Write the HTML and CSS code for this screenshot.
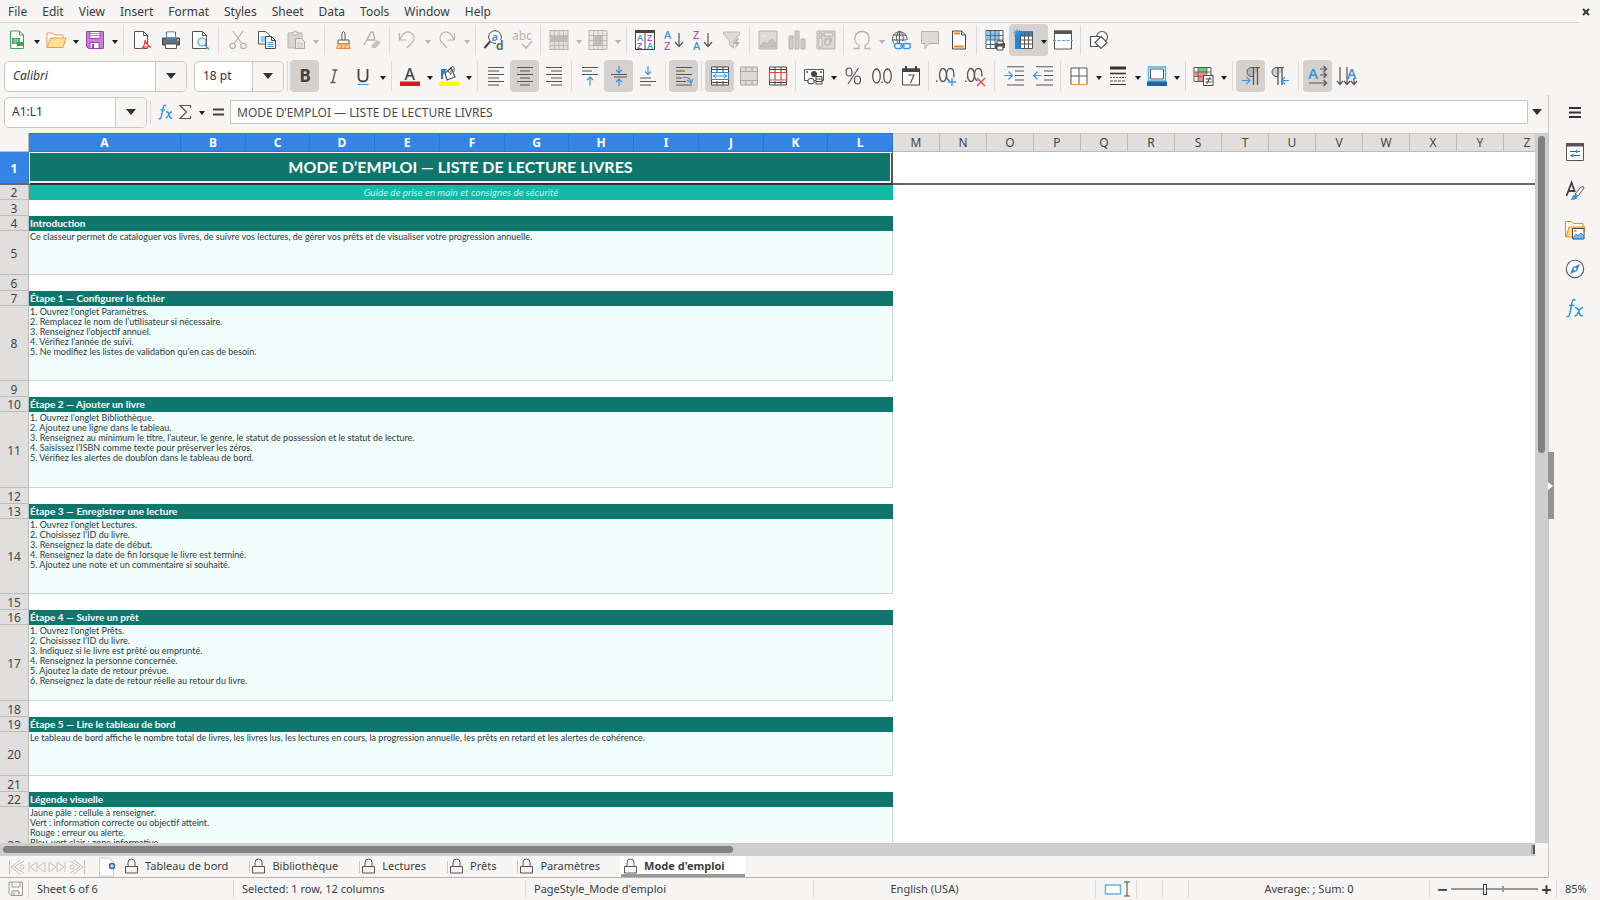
FILE: index.html
```
<!DOCTYPE html>
<html lang="en">
<head>
<meta charset="utf-8">
<title>Mode d'emploi</title>
<link rel="stylesheet" href="styles.css">
</head>
<body>
<div class="app">
<nav class="menubar">
<button>File</button><button>Edit</button><button>View</button><button>Insert</button><button>Format</button><button>Styles</button><button>Sheet</button><button>Data</button><button>Tools</button><button>Window</button><button>Help</button>
<button class="close" aria-label="Close"><svg viewBox="0 0 8 8" width="8" height="8"><path d="M1 1l6 6M7 1l-6 6" stroke="#2e3436" stroke-width="2"/></svg></button>
</nav>

<div class="toolbar">
<button class="tb drop" aria-label="New"><svg viewBox="0 0 20 20"><path d="M3.500 1h9l4 4v13.500h-13z" fill="#fff" stroke="#3fa45b"/><path d="M12.500 1v4h4" fill="none" stroke="#3fa45b"/><path d="M5 8h8v6H5z" fill="#3a9a55"/><path d="M5.500 10h7M5.500 12h7M8 8v6M10.500 8v6" stroke="#d9f0df" stroke-width=".6"/><path d="M10 12h6v4h-6z" fill="#3fa45b"/></svg></button>
<button class="tb drop" aria-label="Open"><svg viewBox="0 0 20 20"><path d="M1 17.500V3h6l2 2h8v3" fill="#fff" stroke="#ed9a4e"/><path d="M1 17.500L4.500 8H20l-3 9.500z" fill="#fbdf93" stroke="#ed9a4e"/></svg></button>
<button class="tb drop" aria-label="Save"><svg viewBox="0 0 20 20"><path d="M1.500 1.500h17v17h-15l-2-2z" fill="#c97fd6" stroke="#9c3fae"/><path d="M5 1.500h10v7H5z" fill="#fff" stroke="#9c3fae"/><path d="M6 3.500h8M6 5.500h8" stroke="#c97fd6"/><path d="M5 12.500h9v6H5z" fill="#fff" stroke="#9c3fae"/><path d="M7 14h2v4H7z" fill="#9c3fae"/></svg></button>
<i class="sep"></i>
<button class="tb" aria-label="Export PDF"><svg viewBox="0 0 20 20"><path d="M2.500 1.500h9l4 4v13h-13z" fill="#fff" stroke="#555"/><path d="M11.500 1.500v4h4" fill="none" stroke="#555"/><path d="M9 19c3-2 4-6 4-9 1 4 3 6 6 7-4-1-7 0-10 2z" fill="#fff" stroke="#e05252" stroke-width="1.300"/></svg></button>
<button class="tb" aria-label="Print"><svg viewBox="0 0 20 20"><path d="M5.500 6V2h9v4" fill="#fff" stroke="#555"/><path d="M1.500 8h17v7h-17z" fill="#6b6b6b" stroke="#444"/><path d="M5 4.500h10V9H5z" fill="#3b95dd"/><path d="M6 2.500h8V7H6z" fill="#fff"/><path d="M4.500 14h11v4.500h-11z" fill="#fff" stroke="#555"/><circle cx="17" cy="10" r=".8" fill="#fff"/></svg></button>
<button class="tb" aria-label="Print preview"><svg viewBox="0 0 20 20"><path d="M2.500 1.500h10l4 4v13h-14z" fill="#fff" stroke="#555"/><path d="M12.500 1.500v4h4" fill="none" stroke="#555"/><circle cx="12" cy="12" r="4" fill="#e6f2fb" stroke="#4a9edb" stroke-width="1.200"/><path d="M15 15l4 4.500" stroke="#4a9edb" stroke-width="1.600"/></svg></button>
<i class="sep wide"></i>
<button class="tb" aria-label="Cut"><svg viewBox="0 0 20 20"><g fill="none" stroke="#b5b3b1" stroke-width="1.200"><path d="M5 1l9 13M15 1L6 14"/><circle cx="4.500" cy="16" r="2.700"/><circle cx="15.500" cy="16" r="2.700"/></g></svg></button>
<button class="tb" aria-label="Copy"><svg viewBox="0 0 20 20"><path d="M1.500 1.500h7l4 3.500v9h-11z" fill="#fff" stroke="#555"/><path d="M3.500 7h5M3.500 9h5M3.500 11h5" stroke="#3b95dd"/><path d="M8.500 6.500h6l4 4v8h-10z" fill="#fff" stroke="#444"/><path d="M14.500 6.500v4h4" fill="none" stroke="#444"/><path d="M10.500 12.500h6M10.500 14.500h6M10.500 16.500h6" stroke="#3b95dd"/></svg></button>
<button class="tb drop off" aria-label="Paste"><svg viewBox="0 0 20 20"><path d="M2 3h14v15H2z" fill="#d8d6d4" stroke="#b5b3b1"/><path d="M6 5V2.500h2V1h2v1.500h2V5z" fill="#eee" stroke="#b5b3b1"/><path d="M9.500 8.500h6l3 3v7h-9z" fill="#eceae9" stroke="#a9a7a5"/><path d="M11 13h6M11 15h6M11 17h6" stroke="#c5c3c1"/></svg></button>
<i class="sep"></i>
<button class="tb" aria-label="Clone formatting"><svg viewBox="0 0 20 20"><path d="M9 10V3q1.500-3 3 0v7" fill="#fff" stroke="#555"/><path d="M5 14v-4h11v4z" fill="#fff" stroke="#555"/><path d="M5 14h11l1 4.500H3.500z" fill="#fbc98a" stroke="#ed8733"/><path d="M8 18l1-3M12 18l.500-3" stroke="#ed8733"/></svg></button>
<button class="tb" aria-label="Clear formatting"><svg viewBox="0 0 20 20"><path d="M2 15L9 2h2l2 9M5 10h7" fill="none" stroke="#b5b3b1" stroke-width="1.400"/><path d="M9 16l6-6 4 2-5 6h-4z" fill="#c5c3c1"/></svg></button>
<i class="sep"></i>
<button class="tb drop off" aria-label="Undo"><svg viewBox="0 0 20 20"><path d="M1.500 3v7h7M2 9.500C5 3 9 1 12.500 2.500s4.500 6 2.500 9l-6 6.500" fill="none" stroke="#b5b3b1" stroke-width="1.200"/></svg></button>
<button class="tb drop off" aria-label="Redo"><svg viewBox="0 0 20 20"><path d="M17.500 3v7h-7M17 9.500C14 3 10 1 6.500 2.500S2 8.500 4 11.500l6 6.500" fill="none" stroke="#b5b3b1" stroke-width="1.200"/></svg></button>
<i class="sep"></i>
<button class="tb" aria-label="Find and replace"><svg viewBox="0 0 20 20"><circle cx="11" cy="7" r="6.300" fill="#fff" stroke="#444"/><path d="M6 11.500L.5 18" stroke="#444" stroke-width="2"/><text x="7.500" y="10.500" font-size="11" font-weight="700" fill="#3b95dd">a</text><path d="M12 10h8v10h-8z" fill="#f6f5f4"/><text x="12" y="19.500" font-size="12" font-weight="600" fill="#446a50">d</text></svg></button>
<button class="tb" aria-label="Spelling"><svg viewBox="0 0 20 20"><text x="-1" y="10" font-size="12" fill="#b5b3b1">abc</text><path d="M9 14l4 4 6-7" fill="none" stroke="#b5b3b1" stroke-width="1.500"/></svg></button>
<i class="sep"></i>
<button class="tb drop off" aria-label="Row"><svg viewBox="0 0 20 20"><path d="M1 .5h18v19H1z" fill="#e4e2e0" stroke="#b5b3b1"/><path d="M1 6h18v5H1z" fill="#c0bebc"/><path d="M5.500 1v18M10 1v18M14.500 1v18M1 5.500h18M1 11.500h18M1 15.500h18" stroke="#b5b3b1" stroke-width=".8"/></svg></button>
<button class="tb drop off" aria-label="Column"><svg viewBox="0 0 20 20"><path d="M1 .5h18v19H1z" fill="#eae8e6" stroke="#b5b3b1"/><path d="M6 5h8v11H6z" fill="#c0bebc"/><path d="M5.500 1v18M10 1v18M14.500 1v18M1 5.500h18M1 10.500h18M1 15.500h18" stroke="#b5b3b1" stroke-width=".8"/></svg></button>
<i class="sep"></i>
<button class="tb" aria-label="Sort"><svg viewBox="0 0 20 20"><path d="M.5 .5h19v19H.5z" fill="#fff" stroke="#444"/><path d="M0 0h20v3H0z" fill="#444"/><path d="M10 3v17" stroke="#444"/><g font-size="9" font-weight="600"><text x="2" y="11" fill="#3b95dd">A</text><text x="2" y="19" fill="#b44ac0">Z</text><text x="12" y="11" fill="#b44ac0">Z</text><text x="12" y="19" fill="#3b95dd">A</text></g></svg></button>
<button class="tb" aria-label="Sort ascending"><svg viewBox="0 0 20 20"><text x="0" y="9" font-size="11" font-weight="500" fill="#3b95dd">A</text><text x="0" y="19.500" font-size="11" font-weight="500" fill="#b44ac0">Z</text><path d="M15 3v13M11 12l4 4.500 4-4.500" fill="none" stroke="#555" stroke-width="1.200"/></svg></button>
<button class="tb" aria-label="Sort descending"><svg viewBox="0 0 20 20"><text x="0" y="9" font-size="11" font-weight="500" fill="#b44ac0">Z</text><text x="0" y="19.500" font-size="11" font-weight="500" fill="#3b95dd">A</text><path d="M15 3v13M11 12l4 4.500 4-4.500" fill="none" stroke="#555" stroke-width="1.200"/></svg></button>
<button class="tb" aria-label="AutoFilter"><svg viewBox="0 0 20 20"><path d="M1.500 2h16v2l-6 7v7l-4-3v-4l-6-7z" fill="#dedcda" stroke="#b5b3b1"/><path d="M15 8l-4 6h3l-1 5 5-7h-3l2-4z" fill="#b5b3b1"/></svg></button>
<i class="sep"></i>
<button class="tb" aria-label="Image"><svg viewBox="0 0 20 20"><path d="M1 1h18v18H1z" fill="#dcdad8" stroke="#b5b3b1"/><circle cx="6" cy="6" r="1.500" fill="#f2f1f0"/><path d="M2 17l4-5 3 2 5-5 4 5v3z" fill="#c4c2c0" stroke="#b5b3b1"/></svg></button>
<button class="tb" aria-label="Chart"><svg viewBox="0 0 20 20"><g fill="#cfcdcb" stroke="#b5b3b1"><path d="M2 6h4v13H2zM8 1h4v18H8zM14 9h4v10h-4z"/></g></svg></button>
<button class="tb" aria-label="Pivot table"><svg viewBox="0 0 20 20"><path d="M1 1h18v18H1z" fill="#dcdad8" stroke="#b5b3b1"/><path d="M3 3h3v3H3zM3 8h3v9H3zM8 3h9v3H8z" fill="#eee" stroke="#b5b3b1"/><path d="M9 15V9h6M9 15h4l3-5M13 7l3 2.500-3 2" fill="none" stroke="#b0aeac"/></svg></button>
<i class="sep"></i>
<button class="tb drop off" aria-label="Special character"><svg viewBox="0 0 20 20"><path d="M1.500 18.500H7v-3C3 13 2.500 9 3 7c1-4 4-5.500 7-5.500S16 3 17 7c.5 2 0 6-4 8.500v3h5.500" fill="none" stroke="#b5b3b1" stroke-width="1.300"/></svg></button>
<button class="tb" aria-label="Hyperlink"><svg viewBox="0 0 20 20"><g fill="none" stroke="#555"><path d="M3 13.500A7.300 7.300 0 1 1 16 10M8.500 1c-4 4-4 9-1 12M8.500 1c4 3 4 7 3.500 10M2 5h13M1.500 10H15M8.500 1v12"/></g><g fill="none" stroke="#3b95dd" stroke-width="1.300"><rect x="3.500" y="13.500" width="8" height="5" rx="2.500"/><rect x="11.500" y="13.500" width="8" height="5" rx="2.500"/><path d="M9 16h5"/></g></svg></button>
<button class="tb" aria-label="Comment"><svg viewBox="0 0 20 20"><path d="M1.500 1.500h17v12H9l-4 5v-5H1.500z" fill="#dcdad8" stroke="#b5b3b1"/></svg></button>
<button class="tb" aria-label="Headers and footers"><svg viewBox="0 0 20 20"><path d="M3.500 1h9l4 4v14h-13z" fill="#fff" stroke="#444"/><path d="M12.500 1v4h4" fill="none" stroke="#444"/><path d="M5 3.500h6M5 16.500h10" stroke="#ed8733" stroke-width="2"/></svg></button>
<i class="sep"></i>
<button class="tb" aria-label="Print area"><svg viewBox="0 0 20 20"><path d="M1 .5h17v18H1z" fill="#fff" stroke="#555"/><path d="M1 1h13v9H1z" fill="#8cc4ee"/><path d="M5.500 1v18M10 1v18M14 1v18M1 5.500h17M1 10h17M1 14.500h17" stroke="#4b6f8c"/><path d="M10 13h10v5H10z" fill="#555"/><path d="M12 11h6v3h-6zM12 16h6v4h-6z" fill="#fff" stroke="#444"/></svg></button>
<button class="tb drop on" aria-label="Freeze rows and columns"><svg viewBox="0 0 20 20"><path d="M2 1.500h16.500v17H2z" fill="#fff" stroke="#555"/><path d="M2 1h16v5H2zM1 5h6v14H1z" fill="#1f86d8"/><path d="M6.500 6v12M10.500 2v17M14.500 2v17M6 6h12M6 10h12M6 14h12" stroke="#555"/><path d="M3 -1v8M-1 3h8M0 0l6 6M6 0L0 6" stroke="#3b95dd"/></svg></button>
<button class="tb" aria-label="Split window"><svg viewBox="0 0 20 20"><path d="M1.500 1h17v18h-17z" fill="#fff" stroke="#555"/><path d="M1 .5h18v3.500H1z" fill="#555"/><path d="M0 10.500h20" stroke="#4aa3e6" stroke-dasharray="3 1.500"/></svg></button>
<i class="sep"></i>
<button class="tb" aria-label="Draw functions"><svg viewBox="0 0 20 20"><g fill="#fff" stroke="#555" stroke-width="1.200"><circle cx="13" cy="7" r="5.500"/><path d="M1.500 6.500h9v10h-9z"/><path d="M12 6.500l6 6-6 6-6-6z"/></g></svg></button>
</div>

<div class="toolbar format">
<div class="combo fontbox"><input type="text" class="italic" value="Calibri" aria-label="Font name"><button aria-label="Font list"><span class="caret"></span></button></div>
<div class="combo sizebox"><input type="text" value="18 pt" aria-label="Font size"><button aria-label="Size list"><span class="caret"></span></button></div>
<i class="sep"></i>
<button class="tb on" aria-label="Bold"><svg viewBox="0 0 20 20"><text x="4.500" y="16" font-size="17" font-weight="700" fill="#444">B</text></svg></button>
<button class="tb" aria-label="Italic"><svg viewBox="0 0 20 20"><path d="M8.500 4h5M6.500 16.500h5M11.500 4l-3 12.500" stroke="#555" stroke-width="1.300"/></svg></button>
<button class="tb drop" aria-label="Underline"><svg viewBox="0 0 20 20"><path d="M5.500 3v8q0 4.500 4.500 4.500t4.500-4.500V3" fill="none" stroke="#444" stroke-width="1.800"/><path d="M4.500 18.500h11" stroke="#3b95dd"/></svg></button>
<i class="sep"></i>
<button class="tb drop" aria-label="Font colour"><svg viewBox="0 0 20 20"><text x="4.500" y="13.500" font-size="16" font-weight="500" fill="#444">A</text><path d="M0 15.500h20V20H0z" fill="#c9211e"/></svg></button>
<button class="tb drop" aria-label="Background colour"><svg viewBox="0 0 20 20"><path d="M6 7l6-5 4 9-8 3z" fill="#fff" stroke="#555" stroke-width="1.200"/><path d="M9 5l3 4M12 8V1.500q2-2 3 0V6" fill="none" stroke="#555"/><path d="M2 3h6L4 9v4H2z" fill="#2f7fc0"/><path d="M0 15.500h20V20H0z" fill="#ff0"/></svg></button>
<i class="sep"></i>
<button class="tb" aria-label="Align left"><svg viewBox="0 0 20 20"><path d="M2 1.500h16M2 5h11M2 8.500h16M2 12h11M2 15.500h16M2 19h11" stroke="#555"/></svg></button>
<button class="tb on" aria-label="Align centre"><svg viewBox="0 0 20 20"><path d="M2 1.500h16M5 5h10M2 8.500h16M5 12h10M2 15.500h16M5 19h10" stroke="#555"/></svg></button>
<button class="tb" aria-label="Align right"><svg viewBox="0 0 20 20"><path d="M2 1.500h16M7 5h11M2 8.500h16M7 12h11M2 15.500h16M7 19h11" stroke="#555"/></svg></button>
<i class="sep"></i>
<button class="tb" aria-label="Align top"><svg viewBox="0 0 20 20"><path d="M2 1.500h16M2 5h10M2 8.500h16" stroke="#555"/><path d="M10 19.500v-8M7 14l3-3 3 3" fill="none" stroke="#3b95dd" stroke-width="1.200"/></svg></button>
<button class="tb on" aria-label="Centre vertically"><svg viewBox="0 0 20 20"><path d="M2 8.500h16M5 11h13" stroke="#555"/><path d="M10 0v6M7 4l3 3 3-3M10 20v-6M7 16l3-3 3 3" fill="none" stroke="#3b95dd" stroke-width="1.200"/></svg></button>
<button class="tb" aria-label="Align bottom"><svg viewBox="0 0 20 20"><path d="M2 12h11M2 15.500h16M2 19h11" stroke="#555"/><path d="M10 0v8M7 5.500l3 3 3-3" fill="none" stroke="#3b95dd" stroke-width="1.200"/></svg></button>
<i class="sep"></i>
<button class="tb on" aria-label="Wrap text"><svg viewBox="0 0 20 20"><path d="M2 1.500h16M2 5h9M2 8.500h16M2 12h6M2 15.500h10M2 19h16" stroke="#555"/><path d="M9 11.500h3q4 0 5 5M13 14l4 3 2-4" fill="none" stroke="#3b95dd" stroke-width="1.200"/></svg></button>
<i class="sep"></i>
<button class="tb on" aria-label="Merge and centre"><svg viewBox="0 0 20 20"><path d="M1.500 1h17v18h-17z" fill="#fff" stroke="#444"/><path d="M1 3.500h18M1 16.500h18M7 1v5M13 1v5M7 15v4M13 15v4" stroke="#444"/><path d="M1.500 6.500h17v7h-17z" fill="#fff" stroke="#2f8bd6" stroke-width="1.200"/><path d="M3 10h14M6 8l-2.500 2L6 12M14 8l2.500 2-2.500 2" fill="none" stroke="#2f8bd6"/></svg></button>
<button class="tb" aria-label="Merge cells"><svg viewBox="0 0 20 20"><path d="M1.500 1h17v18h-17z" fill="#dcdad8" stroke="#a9a7a5"/><path d="M1 5.500h18M1 14.500h18M7 1v4.500M13 1v4.500M7 14.500V19M13 14.500V19" stroke="#a9a7a5"/></svg></button>
<button class="tb" aria-label="Unmerge cells"><svg viewBox="0 0 20 20"><path d="M1.500 1h17v18h-17z" fill="#fff" stroke="#444"/><path d="M1 3.500h18M1 16.500h18M7 1v5M13 1v5M7 15v4M13 15v4" stroke="#444"/><path d="M1.500 6.500h17v7.500h-17zM7 6.500V14M13 6.500V14" fill="#fff" stroke="#e0453f" stroke-width="1.200"/></svg></button>
<i class="sep"></i>
<button class="tb drop" aria-label="Currency"><svg viewBox="0 0 20 20"><path d="M.5 3.500h19v11H.5z" fill="#fff" stroke="#555"/><circle cx="10" cy="8" r="3" fill="#444"/><circle cx="3" cy="6" r="1" fill="#555"/><circle cx="17" cy="6" r="1" fill="#555"/><g fill="#fff" stroke="#444"><ellipse cx="7" cy="14" rx="3" ry="1.500"/><path d="M4 14v3q3 2 6 0v-3M12 10.500h6V18h-6zM12 13h6M12 15.500h6"/></g></svg></button>
<button class="tb" aria-label="Percent"><svg viewBox="0 0 20 20"><g fill="none" stroke="#555" stroke-width="1.200"><ellipse cx="6" cy="6" rx="3" ry="4"/><ellipse cx="14.500" cy="14" rx="3" ry="4"/><path d="M15.500 2L5 18"/></g></svg></button>
<button class="tb" aria-label="Number"><svg viewBox="0 0 20 20"><g fill="none" stroke="#555" stroke-width="1.300"><ellipse cx="4.500" cy="10" rx="3.800" ry="7"/><ellipse cx="15.500" cy="10" rx="3.800" ry="7"/></g><path d="M9.300 15.500h1.500V17H9.300z" fill="#555"/></svg></button>
<button class="tb" aria-label="Date"><svg viewBox="0 0 20 20"><path d="M1.500 3h17v16h-17z" fill="#fff" stroke="#444"/><path d="M1 2.500h18v3.500H1z" fill="#444"/><path d="M5 0v3M15 0v3" stroke="#444" stroke-width="2"/><path d="M7 9h6l-3.500 8" fill="none" stroke="#555" stroke-width="1.200"/></svg></button>
<i class="sep"></i>
<button class="tb" aria-label="Add decimal place"><svg viewBox="0 0 20 20"><g fill="none" stroke="#555" stroke-width="1.300"><ellipse cx="6" cy="9" rx="3.500" ry="6.500"/><path d="M12.500 15c-2-1-3-3-3-6s1-6.500 3.700-6.500 3.700 3 3.700 6v3"/></g><path d="M-1 14.500h1.500V16H-1z" fill="#555"/><path d="M15 12v8M11 16h8" stroke="#3b95dd" stroke-width="1.300"/></svg></button>
<button class="tb" aria-label="Delete decimal place"><svg viewBox="0 0 20 20"><g fill="none" stroke="#555" stroke-width="1.300"><ellipse cx="5" cy="9" rx="3.500" ry="6.500"/><path d="M11.500 15c-2-1-3-3-3-6s1-6.500 3.700-6.500 3.700 3 3.700 6v2"/></g><path d="M-1 14.500h1.500V16H-1z" fill="#555"/><path d="M11 12l8 8M19 12l-8 8" stroke="#e0453f" stroke-width="1.300"/></svg></button>
<i class="sep wide"></i>
<button class="tb" aria-label="Increase indent"><svg viewBox="0 0 20 20"><path d="M3 .8h17M11 5h9M11 9.500h9M11 14h9M3 19h17" stroke="#555" stroke-width="1.100"/><path d="M0 9.500h8M4.500 5.500l4 4-4 4" fill="none" stroke="#3b95dd" stroke-width="1.200"/></svg></button>
<button class="tb" aria-label="Decrease indent"><svg viewBox="0 0 20 20"><path d="M3 .8h17M11 5h9M11 9.500h9M11 14h9M3 19h17" stroke="#555" stroke-width="1.100"/><path d="M8.500 9.500h-8M4.500 5.500l-4 4 4 4" fill="none" stroke="#3b95dd" stroke-width="1.200"/></svg></button>
<i class="sep"></i>
<button class="tb drop" aria-label="Borders"><svg viewBox="0 0 20 20"><path d="M2 18.500V2h16v16.500M10 2v16.500M2 10h16" fill="#fff" stroke="#555"/><path d="M2 18.700h16" stroke="#ed8733"/></svg></button>
<button class="tb drop" aria-label="Border style"><svg viewBox="0 0 20 20"><path d="M2 2h16" stroke="#333" stroke-width="3"/><path d="M2 7.500h16" stroke="#333" stroke-width="1.600"/><path d="M2 11.500h16" stroke="#555" stroke-dasharray="2 1"/><path d="M2 15h16" stroke="#555" stroke-dasharray="3 1"/><path d="M2 18.500h16" stroke="#333"/></svg></button>
<button class="tb drop" aria-label="Border colour"><svg viewBox="0 0 20 20"><path d="M1.500 1h17v14h-17z" fill="#fff" stroke="#4aaee8" stroke-width="1.400"/><path d="M3.500 3h13v10h-13z" fill="#fff" stroke="#555"/><path d="M0 15.500h20V20H0z" fill="#2a6099"/></svg></button>
<i class="sep"></i>
<button class="tb drop" aria-label="Conditional formatting"><svg viewBox="0 0 20 20"><path d="M0 1.500h17v14H0z" fill="#fff" stroke="#555"/><path d="M4 2h9v4H4z" fill="#6cc487"/><path d="M0 6h13v4H0zM4 11h6v4H4z" fill="#f08a86"/><path d="M4 2v13M0 6h17M0 10.500h17M13 2v6" stroke="#555" stroke-width=".8"/><path d="M9.500 9.500h9.500v10H9.500z" fill="#fff" stroke="#444"/><path d="M11.500 13h6M11.500 16h6M16 11l-3 7" stroke="#444"/></svg></button>
<i class="sep"></i>
<button class="tb on" aria-label="Left to right"><svg viewBox="0 0 20 20"><path d="M19 1.500h-8.500a4.500 4.500 0 0 0 0 9H12" fill="#bbb8b5" stroke="#555"/><path d="M12.500 1.500V19M16.500 1.500V19" stroke="#555" stroke-width="1.300"/><path d="M1 14.500h8M5.500 11l3.500 3.500L5.500 18" fill="none" stroke="#3b95dd" stroke-width="1.200"/></svg></button>
<button class="tb" aria-label="Right to left"><svg viewBox="0 0 20 20"><path d="M14 1.500H6.500a4.500 4.500 0 0 0 0 9H8" fill="#ccc" stroke="#555"/><path d="M8 1.500V19M12 1.500V19" stroke="#555" stroke-width="1.300"/><path d="M19 14.500h-7M15 11l-3.500 3.500L15 18" fill="none" stroke="#3b95dd" stroke-width="1.200"/></svg></button>
<i class="sep wide"></i>
<button class="tb on" aria-label="Text horizontal"><svg viewBox="0 0 20 20"><text x="0" y="12.500" font-size="15" font-weight="600" fill="#3b95dd">A</text><path d="M12 3h6M12 9h6M1 17h17M15.500 0L18.500 3l-3 3M15.500 6.500l3 2.500-3 3M15.500 14l3 3-3 3" fill="none" stroke="#555" stroke-width="1.200"/></svg></button>
<button class="tb" aria-label="Text vertical"><svg viewBox="0 0 20 20"><text x="10" y="12.500" font-size="14" font-weight="600" fill="#3b95dd">A</text><path d="M3 1v17M10 1v17M17 12v6M0 15l3 3.500L6 15M7 15l3 3.500 3-3.500M14 15l3 3.500 3-3.500" fill="none" stroke="#555" stroke-width="1.200"/></svg></button>
</div>

<div class="work">
<main class="main">
<div class="formulabar">
<div class="combo namebox"><input type="text" value="A1:L1" aria-label="Name box"><button aria-label="Names"><span class="caret"></span></button></div>
<i class="sep"></i>
<button class="fb fx" aria-label="Function wizard"><svg viewBox="0 0 16 16"><path d="M8 2Q6 0 5 4L3.500 12Q2.500 16 .5 14.500M2.500 6h4.500" fill="none" stroke="#3b95dd" stroke-width="1.400"/><path d="M8 8q2-1 3 3t3 3M14 7.500q-2 .5-3.500 3.500T7.500 14" fill="none" stroke="#3b95dd" stroke-width="1.400"/></svg></button>
<button class="fb sum" aria-label="Select function"><svg viewBox="0 0 16 16"><path d="M12.500 4V1.500H2L8.500 8 2 14.500h10.500V12" fill="none" stroke="#555" stroke-width="1.200"/></svg></button>
<button class="fb eq" aria-label="Formula"><svg viewBox="0 0 16 16"><path d="M3 5.500h11M3 10.500h11" stroke="#444" stroke-width="2"/></svg></button>
<input class="formula" type="text" value="MODE D’EMPLOI — LISTE DE LECTURE LIVRES" aria-label="Input line">
<button class="expand" aria-label="Expand formula bar"><span class="caret"></span></button>
</div>

<div class="sheet">
<div class="gridview">
<table class="grid">
<colgroup><col class="c-row"><col class="c-a"><col class="c-65"><col class="c-64"><col class="c-65"><col class="c-65"><col class="c-65"><col class="c-64"><col class="c-65"><col class="c-65"><col class="c-65"><col class="c-64"><col class="c-65"><col span="14" class="c-std"></colgroup>
<thead><tr><th class="corner"></th><th class="sel">A</th><th class="sel">B</th><th class="sel">C</th><th class="sel">D</th><th class="sel">E</th><th class="sel">F</th><th class="sel">G</th><th class="sel">H</th><th class="sel">I</th><th class="sel">J</th><th class="sel">K</th><th class="sel">L</th><th>M</th><th>N</th><th>O</th><th>P</th><th>Q</th><th>R</th><th>S</th><th>T</th><th>U</th><th>V</th><th>W</th><th>X</th><th>Y</th><th>Z</th></tr></thead>
<tbody>
<tr class="r-title"><th class="sel">1</th><td colspan="12" class="title">MODE D’EMPLOI — LISTE DE LECTURE LIVRES</td><td colspan="14"></td></tr>
<tr class="r-head"><th>2</th><td colspan="12" class="subtitle">Guide de prise en main et consignes de sécurité</td><td colspan="14"></td></tr>
<tr class="r-gap"><th>3</th><td colspan="26"></td></tr>
<tr class="r-head"><th>4</th><td colspan="12" class="section">Introduction</td><td colspan="14"></td></tr>
<tr class="r-short"><th>5</th><td colspan="12" class="text">Ce classeur permet de cataloguer vos livres, de suivre vos lectures, de gérer vos prêts et de visualiser votre progression annuelle.</td><td colspan="14"></td></tr>
<tr class="r-gap"><th>6</th><td colspan="26"></td></tr>
<tr class="r-head"><th>7</th><td colspan="12" class="section">Étape 1 — Configurer le fichier</td><td colspan="14"></td></tr>
<tr class="r-long odd"><th>8</th><td colspan="12" class="text">1. Ouvrez l’onglet Paramètres.<br>2. Remplacez le nom de l’utilisateur si nécessaire.<br>3. Renseignez l’objectif annuel.<br>4. Vérifiez l’année de suivi.<br>5. Ne modifiez les listes de validation qu’en cas de besoin.</td><td colspan="14"></td></tr>
<tr class="r-gap"><th>9</th><td colspan="26"></td></tr>
<tr class="r-head"><th>10</th><td colspan="12" class="section">Étape 2 — Ajouter un livre</td><td colspan="14"></td></tr>
<tr class="r-long"><th>11</th><td colspan="12" class="text">1. Ouvrez l’onglet Bibliothèque.<br>2. Ajoutez une ligne dans le tableau.<br>3. Renseignez au minimum le titre, l’auteur, le genre, le statut de possession et le statut de lecture.<br>4. Saisissez l’ISBN comme texte pour préserver les zéros.<br>5. Vérifiez les alertes de doublon dans le tableau de bord.</td><td colspan="14"></td></tr>
<tr class="r-gap"><th>12</th><td colspan="26"></td></tr>
<tr class="r-head"><th>13</th><td colspan="12" class="section">Étape 3 — Enregistrer une lecture</td><td colspan="14"></td></tr>
<tr class="r-long odd"><th>14</th><td colspan="12" class="text">1. Ouvrez l’onglet Lectures.<br>2. Choisissez l’ID du livre.<br>3. Renseignez la date de début.<br>4. Renseignez la date de fin lorsque le livre est terminé.<br>5. Ajoutez une note et un commentaire si souhaité.</td><td colspan="14"></td></tr>
<tr class="r-gap"><th>15</th><td colspan="26"></td></tr>
<tr class="r-head"><th>16</th><td colspan="12" class="section">Étape 4 — Suivre un prêt</td><td colspan="14"></td></tr>
<tr class="r-long"><th>17</th><td colspan="12" class="text">1. Ouvrez l’onglet Prêts.<br>2. Choisissez l’ID du livre.<br>3. Indiquez si le livre est prêté ou emprunté.<br>4. Renseignez la personne concernée.<br>5. Ajoutez la date de retour prévue.<br>6. Renseignez la date de retour réelle au retour du livre.</td><td colspan="14"></td></tr>
<tr class="r-gap"><th>18</th><td colspan="26"></td></tr>
<tr class="r-head"><th>19</th><td colspan="12" class="section">Étape 5 — Lire le tableau de bord</td><td colspan="14"></td></tr>
<tr class="r-short"><th>20</th><td colspan="12" class="text">Le tableau de bord affiche le nombre total de livres, les livres lus, les lectures en cours, la progression annuelle, les prêts en retard et les alertes de cohérence.</td><td colspan="14"></td></tr>
<tr class="r-gap"><th>21</th><td colspan="26"></td></tr>
<tr class="r-head"><th>22</th><td colspan="12" class="section">Légende visuelle</td><td colspan="14"></td></tr>
<tr class="r-long"><th>23</th><td colspan="12" class="text">Jaune pâle : cellule à renseigner.<br>Vert : information correcte ou objectif atteint.<br>Rouge : erreur ou alerte.<br>Bleu-vert clair : zone informative.</td><td colspan="14"></td></tr>
</tbody>
</table>
</div>
<div class="vscroll"><div class="vthumb"></div></div>
<div class="hscroll"><div class="hthumb"></div><div class="hsplit"></div></div>
</div>

<div class="tabs">
<button class="nav" aria-label="First sheet"><svg viewBox="0 0 18 16"><path d="M1.500 1v14M16 2L6 8l10 6M12 1L3 8l9 7" fill="none" stroke="#c4c2c0"/><circle cx="14" cy="8" r="2" fill="none" stroke="#c4c2c0"/></svg></button>
<button class="nav" aria-label="Previous sheet"><svg viewBox="0 0 18 16"><path d="M1 3v10M9 3L2 8l7 5zM17 3l-7 5 7 5z" fill="none" stroke="#c4c2c0"/></svg></button>
<button class="nav" aria-label="Next sheet"><svg viewBox="0 0 18 16"><path d="M17 3v10M9 3l7 5-7 5zM1 3l7 5-7 5z" fill="none" stroke="#c4c2c0"/></svg></button>
<button class="nav" aria-label="Last sheet"><svg viewBox="0 0 18 16"><path d="M16.500 1v14M2 2l10 6-10 6M6 1l9 7-9 7" fill="none" stroke="#c4c2c0"/><circle cx="4" cy="8" r="2" fill="none" stroke="#c4c2c0"/></svg></button>
<button class="add" aria-label="Add sheet"><svg viewBox="0 0 18 20"><path d="M1.500 1h10l4 4v14h-14z" fill="#fff" stroke="#ccc"/><circle cx="14" cy="9" r="3.200" fill="#2a62a8"/><path d="M14 7v4M12 9h4" stroke="#fff"/></svg></button>
<button class="tab first"><svg viewBox="0 0 13 16"><path d="M3 8V4.500q0-3.500 3.500-3.500T10 4.500V8M.5 8.500h12v6.500H.5z" fill="none" stroke="#555"/></svg>Tableau de bord</button>
<button class="tab"><svg viewBox="0 0 13 16"><path d="M3 8V4.500q0-3.500 3.500-3.500T10 4.500V8M.5 8.500h12v6.500H.5z" fill="none" stroke="#555"/></svg>Bibliothèque</button>
<button class="tab"><svg viewBox="0 0 13 16"><path d="M3 8V4.500q0-3.500 3.500-3.500T10 4.500V8M.5 8.500h12v6.500H.5z" fill="none" stroke="#555"/></svg>Lectures</button>
<button class="tab"><svg viewBox="0 0 13 16"><path d="M3 8V4.500q0-3.500 3.500-3.500T10 4.500V8M.5 8.500h12v6.500H.5z" fill="none" stroke="#555"/></svg>Prêts</button>
<button class="tab"><svg viewBox="0 0 13 16"><path d="M3 8V4.500q0-3.500 3.500-3.500T10 4.500V8M.5 8.500h12v6.500H.5z" fill="none" stroke="#555"/></svg>Paramètres</button>
<button class="tab current"><svg viewBox="0 0 13 16"><path d="M3 8V4.500q0-3.500 3.500-3.500T10 4.500V8M.5 8.500h12v6.500H.5z" fill="none" stroke="#555"/></svg>Mode d'emploi</button>
</div>
</main>

<aside class="sidebar">
<button class="sb menu" aria-label="Sidebar settings"><svg viewBox="0 0 20 20"><path d="M4 5h12M4 9.500h12M4 14h12" stroke="#333" stroke-width="1.800"/></svg></button>
<button class="sb" aria-label="Properties"><svg viewBox="0 0 20 20"><path d="M1.500 1.500h17v17h-17z" fill="#fff" stroke="#555"/><path d="M1 1h18v3.500H1z" fill="#555"/><path d="M5 9.500h10M5 13.500h10" stroke="#555"/><path d="M11 7.500l3 2-3 2zM6 13.500a1.500 1.500 0 1 0 3 0 1.500 1.500 0 1 0-3 0" fill="#3b95dd"/></svg></button>
<button class="sb" aria-label="Styles"><svg viewBox="0 0 20 20"><path d="M1.500 15L6.500 1.500 10 11M3 10h6" fill="none" stroke="#444" stroke-width="1.800"/><path d="M10 13l6-7q3-1 3 1l-6 8z" fill="#fff" stroke="#555"/><path d="M5 19q2-1 2.500-3.500 2-3 5-.5 1 4-7.500 4z" fill="#3b95dd"/></svg></button>
<button class="sb" aria-label="Gallery"><svg viewBox="0 0 20 20"><path d="M.5 17V1.500h6l2 2H18V7" fill="#fff" stroke="#ed8733"/><path d="M1 17L4 7h16l-2 10z" fill="#fbdf93" stroke="#ed8733"/><path d="M7.500 8.500h11.500v10.500H7.500z" fill="#fff" stroke="#444"/><path d="M8 18l3-4 2 2 3-3 2.500 2.500V18.500H8z" fill="#7fbcec" stroke="#2f8bd6"/><circle cx="10.500" cy="11" r="1.200" fill="#ed8733"/></svg></button>
<button class="sb" aria-label="Navigator"><svg viewBox="0 0 20 20"><circle cx="10" cy="10" r="8.700" fill="#fff" stroke="#555" stroke-width="1.100"/><path d="M15 5l-3 7-7 3 3-7z" fill="#2f8bd6"/><circle cx="10" cy="10" r="1.400" fill="#fff"/></svg></button>
<button class="sb" aria-label="Functions"><svg viewBox="0 0 20 20"><path d="M10.500 2.500Q8 0 7 4.500L5 15Q4 20 1.500 18M4 7.500h5.500" fill="none" stroke="#3b95dd" stroke-width="1.500"/><path d="M10 10q3-1 4 4t4 3.500M18 9.500q-3 .5-4.500 4.500T9.500 18" fill="none" stroke="#3b95dd" stroke-width="1.500"/></svg></button>
<button class="grip" aria-label="Hide sidebar"><span></span></button>
</aside>
</div>

<footer class="status">
<span class="s-save"><svg viewBox="0 0 16 16"><path d="M1 1h13.500v13.500H3L1 12.500zM4 1v5h8V1M4 14.500V10h7v4.500M6 11.500v3" fill="none" stroke="#999"/></svg></span>
<span class="s-sheet">Sheet 6 of 6</span>
<span class="s-sel">Selected: 1 row, 12 columns</span>
<span class="s-style">PageStyle_Mode d'emploi</span>
<span class="s-lang">English (USA)</span>
<span class="s-ins"><svg viewBox="0 0 28 18"><path d="M1.500 5h15v9h-15z" fill="#fff" stroke="#6fb1dc" stroke-width="1.500"/><path d="M20 2h6M20 16h6M23 2v14" stroke="#444"/></svg></span>
<span class="s-e1"></span><span class="s-e2"></span>
<span class="s-avg">Average: ; Sum: 0</span>
<span class="s-zoom"><button aria-label="Zoom out">−</button><input type="range" min="0" max="100" value="39" aria-label="Zoom"><button aria-label="Zoom in">+</button></span>
<span class="s-pct">85%</span>
</footer>
</div>
</body>
</html>
```
FILE: styles.css
```
* { box-sizing: border-box; }
body { margin: 0; background: #f6f5f4; color: #3a3d3e; font: 12px/16px "Noto Sans", "Open Sans", sans-serif; overflow: hidden; }
button, input { font: inherit; color: inherit; border: 0; background: none; padding: 0; margin: 0; outline: 0; border-radius: 0; }
svg { display: block; overflow: visible; font-family: "Noto Sans", sans-serif; }
.app { height: 100vh; display: flex; flex-direction: column; }

.menubar { display: flex; align-items: center; height: 23px; padding-right: 21px; background: linear-gradient(#d5d3d1, #d5d3d1) left bottom / calc(100% - 21px) 1px no-repeat; }
.menubar button { padding: 0 7px 0 8px; }
.menubar .close { margin-left: auto; padding: 0; margin-right: -11px; }

.toolbar { display: flex; align-items: center; height: 36px; padding: 0 0 2px 2px; }
.sep { width: 1px; height: 30px; margin: 0 3px; background: #dcdad8; flex: none; }
.drop + .sep { margin-left: 4px; }
.sep.wide { margin: 0 4px; }
.tb { width: 29px; height: 32px; display: flex; align-items: center; justify-content: center; border-radius: 4px; flex: none; }
.tb svg { width: 20px; height: 20px; flex: none; }
.tb.on { background: #d6d1cd; }
.tb.drop { width: 39px; justify-content: flex-start; padding-left: 5px; gap: 7px; }
.tb.drop::after { content: ""; border: 3px solid transparent; border-top: 4px solid #1d1d1d; border-bottom: 0; margin-top: 4px; }
.tb.off::after { border-top-color: #b5b3b1; }
.toolbar.format { padding-left: 4px; }

.combo { display: flex; border: 1px solid #cdc7c2; border-radius: 5px; background: #fff; height: 31px; overflow: hidden; flex: none; color: #2e3436; }
.combo input { flex: 1; min-width: 0; padding: 0 8px; }
.combo button { width: 31px; border-left: 1px solid #cdc7c2; background: #f6f5f4; display: flex; align-items: center; justify-content: center; }
.caret { border: 5px solid transparent; border-top: 6px solid #2e3436; border-bottom: 0; }
.italic { font-style: italic; }
.fontbox { width: 183px; margin-right: 7px; }
.sizebox { width: 90px; }

.work { flex: 1; min-height: 0; display: flex; }
.main { flex: 1; min-width: 0; display: flex; flex-direction: column; }
.formulabar { display: flex; align-items: center; height: 38px; padding: 0 2px 4px 4px; }
.namebox { width: 143px; }
.namebox input { padding: 0 7px; }
.formulabar .sep { height: 24px; margin: 0 5px 0 3px; }
.toolbar .sizebox + .sep { margin: 0 2px 0 3px; }
.fb { display: flex; align-items: center; flex: none; }
.fb svg { width: 16px; height: 16px; }
.fx { width: 22px; padding-left: 2px; }
.sum { width: 32px; gap: 5px; }
.sum::after { content: ""; border: 3px solid transparent; border-top: 4px solid #1d1d1d; border-bottom: 0; margin-top: 2px; }
.eq { width: 20px; }
.formula { flex: 1; height: 24px; border: 1px solid #c9c7c5; background: #fff; padding: 0 6px; color: #4a4a4a; }
.expand { width: 18px; display: flex; justify-content: center; }

.sheet { flex: 1; min-height: 0; display: grid; grid-template-columns: minmax(0, 1fr) 13px; grid-template-rows: minmax(0, 1fr) 13px; }
.gridview { overflow: hidden; background: #fff; }
.grid { border-collapse: separate; border-spacing: 0; table-layout: fixed; width: 1551px; }
.c-row { width: 29px; }
.c-a { width: 152px; }
.c-65 { width: 65px; }
.c-64 { width: 64px; }
.c-std { width: 47px; }
.grid th, .grid td { padding: 0; overflow: hidden; }
.grid th { background: #e1dfde; color: #444; font-weight: 400; border-right: 1px solid #bdbbb9; border-bottom: 1px solid #bdbbb9; line-height: 14px; }
.grid tbody th { padding-top: 2px; line-height: 12px; }
.grid thead th { height: 19px; border-top: 1px solid #cfcdcb; }
.grid thead .corner { background: #f6f5f4; border-top: 0; }
.grid th.sel { background: #3584e4; color: #fff; font-weight: 700; border-color: #2f74c9; }
.grid td { font-family: Lato, sans-serif; vertical-align: top; white-space: nowrap; }
.r-title { height: 33px; }
.r-title td, .grid .r-title th { border-bottom: 2px solid #666; }
.grid .title { background: #0f766e; color: #fff; font-size: 16px; line-height: 27px; font-weight: 700; text-align: center; border: 1px solid #fff; border-right: 2px solid #555; border-bottom: 2px solid #333; box-shadow: inset 0 -2px #e8f3f1, inset -1px 0 #fff; }
.r-head { height: 15px; }
.r-gap { height: 16px; }
.r-short { height: 44px; }
.r-long { height: 76px; }
.r-long.odd { height: 75px; }
.grid .subtitle { background: #14b8a6; color: #c4f3ec; font-size: 10px; line-height: 14px; font-style: italic; text-align: center; }
.grid .section { background: #0f766e; color: #fff; font-size: 10px; line-height: 14px; font-weight: 700; padding-left: 1px; }
.grid .text { background: #f0fdfa; color: #2b3a42; font-size: 9px; line-height: 10px; padding: 1px 0 0 1px; border-right: 1px solid #ccd5d3; border-bottom: 1px solid #ccd5d3; }

.vscroll { background: #cecece; padding: 3px; }
.vthumb { height: 45%; width: 7px; border-radius: 4px; background: #7f807f; }
.hscroll { background: #cecece; display: flex; align-items: center; justify-content: space-between; padding-left: 3px; }
.hthumb { width: 730px; max-width: 48%; height: 7px; border-radius: 4px; background: #7f807f; }
.hsplit { width: 4px; height: 9px; background: #555; border-left: 2px solid #aaa; }
.sheet::after { content: ""; background: #f6f5f4; }

.tabs { display: flex; align-items: stretch; height: 22px; padding-left: 8px; border-bottom: 1px solid #b5b3b1; font-size: 11px; }
.nav { width: 20px; display: flex; align-items: center; }
.nav svg { width: 18px; height: 16px; }
.add { width: 31px; padding-left: 10px; }
.add svg { width: 18px; height: 20px; }
.tab { display: flex; align-items: center; gap: 7px; padding: 0 20px 1px 3px; border-left: 1px solid transparent; background: linear-gradient(#c9c7c5, #c9c7c5) left center / 1px 12px no-repeat; }
.tab.first { background: none; padding-left: 5px; }
.tab svg { width: 13px; height: 16px; }
.tab.current { background: #fff; font-weight: 700; box-shadow: inset 0 -3px #999; }

.sidebar { width: 52px; border-left: 1px solid #c4c2c0; position: relative; display: flex; flex-direction: column; align-items: center; gap: 7px; padding: 2px 0 0 1px; }
.sb { width: 32px; height: 32px; display: flex; align-items: center; justify-content: center; }
.sb svg { width: 20px; height: 20px; }
.grip { position: absolute; left: -1px; top: 357px; width: 6px; height: 67px; background: #939393; display: flex; align-items: center; }
.grip span { border: 4px solid transparent; border-left: 5px solid #fff; border-right: 0; }

.status { display: flex; align-items: center; height: 22px; flex: none; font-size: 11px; }
.status > span { display: flex; align-items: center; height: 18px; border-left: 1px solid #dcdad8; padding-left: 8px; white-space: nowrap; flex: none; }
.status > .s-save { width: 28px; border: 0; }
.s-save svg { width: 16px; height: 16px; }
.s-sheet { width: 205px; }
.s-sel { width: 292px; }
.s-style { width: 288px; }
.status > .s-lang { flex: 1 1 0; justify-content: center; padding: 0 60px 0 0; }
.s-ins { width: 41px; }
.s-ins svg { width: 28px; height: 18px; }
.s-e1, .s-e2 { width: 26px; }
.status > .s-avg { width: 241px; padding: 0; justify-content: center; }
.status > .s-zoom { width: 127px; gap: 3px; padding-left: 7px; }
.s-zoom button { font-size: 18px; font-weight: 700; line-height: 16px; width: 11px; }
.s-zoom input { appearance: none; width: 87px; height: 16px; background: linear-gradient(#999, #999) center / 100% 2px no-repeat, linear-gradient(#999, #999) 60% center / 2px 6px no-repeat; }
.s-zoom input::-webkit-slider-thumb { appearance: none; width: 4px; height: 11px; background: #eee; border: 1px solid #444; }
.s-pct { width: 44px; }
```
